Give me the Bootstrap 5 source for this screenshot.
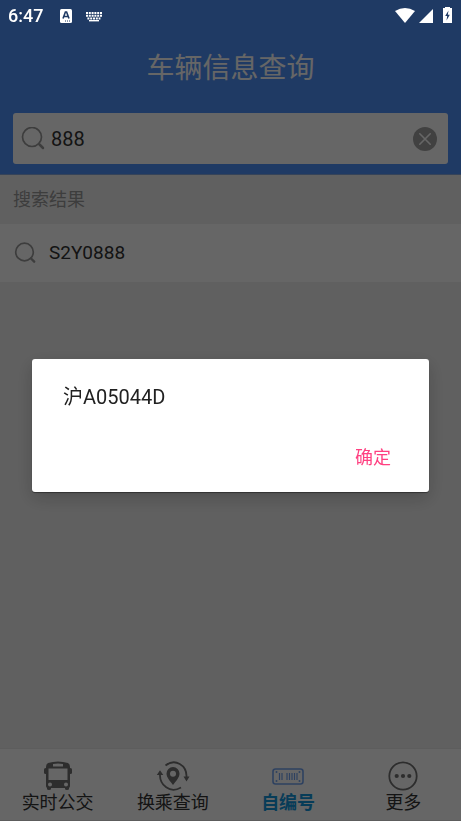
<!DOCTYPE html>
<html lang="zh-CN">
<head>
<meta charset="utf-8">
<meta name="viewport" content="width=device-width, initial-scale=1">
<title>车辆信息查询</title>
<link href="https://cdn.jsdelivr.net/npm/bootstrap@5.3.0/dist/css/bootstrap.min.css" rel="stylesheet">
<style>
  body { background: #f0f0f0; font-family: Roboto, "Noto Sans CJK SC", sans-serif; color: #333; }
  svg { display: block; flex: none; }
  .app-head { background: #4e91fa; padding-bottom: 10px; border-bottom: 1px solid #84a8de; }
  .status { z-index: 1060; height: 30px; padding: 1px 8px 0; color: #fff; font-size: 18px; font-weight: 500; }
  .app-title { font-size: 28px; font-weight: 400; line-height: 40px; padding: 19px 0 24px; }
  .search { margin: 0 13px; height: 51px; padding: 0 11px 0 8px; border-radius: 3px; }
  .search input { font-size: 20px; color: #333; padding: 0 6px; line-height: 30px; }
  .search input::-webkit-search-cancel-button { display: none; }
  .section-label { font-size: 18px; font-weight: 400; line-height: 24px; padding: 13px 13px 12px; color: #999; }
  .result { height: 58px; padding: 0 14px; gap: 12px; font-size: 19px; color: #333; border: 0; border-bottom: 1px solid #e0e0e0; border-radius: 0; }
  .tabs { border-top: 1px solid #e8e8e8; border-bottom: 1px solid #e6e6e6; padding: 12px 0 5px; }
  .tabs a { color: #333; font-size: 18px; line-height: 24px; }
  .tabs a.active { color: #1296db; font-weight: 700; }
  .scrim { background: #000; opacity: .6; z-index: 1040; }
  .dialog-area { padding-top: 30px; }
  .dialog-area .modal-dialog { margin: 0 32px; max-width: none; min-height: 100%; }
  .dialog-area .modal-content { border: 0; border-radius: 3px; padding: 22px 31px 15px; box-shadow: 0 6px 18px rgba(0,0,0,.2), 0 1px 1px rgba(0,0,0,.4); }
  .plate { font-size: 20px; line-height: 32px; color: #212121; }
  .confirm { color: #ff4081; font-size: 18px; line-height: 27px; padding: 6px 7px; margin-top: 25px; }
</style>
</head>
<body class="d-flex flex-column min-vh-100">
<header class="app-head">
  <div class="status position-relative d-flex align-items-center">
    <span>6:47</span>
    <svg class="ms-3" width="14" height="14" viewBox="0 0 14 14" aria-hidden="true"><rect x="1" width="12" height="14" rx="1.5" fill="#fff"/><path d="M4 9.5 6.4 3h1.2L10 9.5M5 7.5h4" fill="none" stroke="#1f3a64" stroke-width="1.6"/><path d="M6 12h1m1 0h1m1 0h1" stroke="#1f3a64"/></svg>
    <svg class="ms-2 me-auto" width="28" height="12" viewBox="0 0 28 12" aria-hidden="true"><g stroke="#fff" stroke-width="2" stroke-dasharray="2 .8"><path d="M5 3h16M5 5.7h16M6.4 8.4h13"/></g><path d="M8 10.7h10" stroke="#fff" stroke-width="1.4"/></svg>
    <svg width="20" height="18" viewBox="0 0 20 18" aria-hidden="true"><path d="M0 4Q10-2 20 4L10 16Z" fill="#fff"/></svg>
    <svg class="ms-1" width="14" height="18" viewBox="0 0 14 18" aria-hidden="true"><path d="M0 16 14 2v14Z" fill="#fff"/></svg>
    <svg class="ms-2" width="12" height="18" viewBox="0 0 12 18" aria-hidden="true"><path d="M4 0h5v1h2v15H2V1h2Z" fill="#fff"/><path d="M7.5 3.5 4.2 9h2L5.5 13.5 8.8 7.8h-2Z" fill="#1f3a64"/></svg>
  </div>
  <h1 class="app-title text-white text-center m-0">车辆信息查询</h1>
  <form class="search bg-white d-flex align-items-center" role="search">
    <svg width="24" height="24" viewBox="0 0 24 24" fill="none" stroke="#999" aria-hidden="true"><circle cx="11" cy="10" r="9.5" stroke-width="1.7"/><path d="m18.5 17.5 3.500 3.500" stroke-width="2.5" stroke-linecap="round"/></svg>
    <input class="form-control border-0 shadow-none bg-transparent flex-grow-1" type="search" value="888" aria-label="车辆信息查询">
    <button class="btn p-0 border-0" type="reset" aria-label="清除"><svg width="24" height="24" viewBox="0 0 24 24"><circle cx="12" cy="12" r="12" fill="#a3a3a3"/><path d="m6.8 6.8 10.4 10.4m0-10.4L6.8 17.2" stroke="#fff" stroke-width="1.6" stroke-linecap="round"/></svg></button>
  </form>
</header>
<main class="flex-grow-1">
  <h2 class="section-label m-0">搜索结果</h2>
  <div class="list-group list-group-flush">
    <button type="button" class="list-group-item list-group-item-action result bg-white d-flex align-items-center">
      <svg width="23" height="22" viewBox="0 0 23 22" fill="none" stroke="#999" aria-hidden="true"><circle cx="10.5" cy="10" r="8.8" stroke-width="1.7"/><path d="m17 16.5 3.2 3.2" stroke-width="2.4" stroke-linecap="round"/></svg>
      <span>S2Y0888</span>
    </button>
  </div>
</main>
<nav class="tabs bg-white row g-0 text-center">
  <a href="#bus" class="col text-decoration-none d-flex flex-column align-items-center">
    <svg width="30" height="30" viewBox="0 0 30 30" fill="#707070" aria-hidden="true"><path fill-rule="evenodd" d="M3 6Q3 3 5 2 15-1 25 2q2 1 2 4v19q0 1-1 2v1q0 1-2 1t-2-1v-1H8v1q0 1-2 1t-2-1v-1q-1-1-1-2ZM10 3v2.5h10V3Q15 2 10 3ZM5.5 7.5V19h19V7.5ZM7 21.5a2 2 0 1 0 0 4 2 2 0 0 0 0-4Zm16 0a2 2 0 1 0 0 4 2 2 0 0 0 0-4Z"/><rect x="1" y="7" width="3" height="6" rx="1.5"/><rect x="26" y="7" width="3" height="6" rx="1.5"/></svg>
    <span>实时公交</span>
  </a>
  <a href="#transfer" class="col text-decoration-none d-flex flex-column align-items-center">
    <svg width="34" height="30" viewBox="0 0 34 30" aria-hidden="true"><g fill="none" stroke="#707070" stroke-width="1.8"><path d="M9.5 4.5C19-3 31 4 30.5 16M4 13C3.5 24 14 33 25 26.5"/></g><path d="m27.5 15.5 3 5 3-5ZM.8 14 4 9.3 7.3 14Z" fill="#707070"/><path fill-rule="evenodd" d="M17 6A6.5 6.5 0 0 0 10.5 12.5c0 4 3.5 7.5 6.5 11.5 3-4 6.5-7.5 6.5-11.5A6.5 6.5 0 0 0 17 6Zm0 3.7a3 3 0 1 1 0 6 3 3 0 0 1 0-6Z" fill="#707070"/></svg>
    <span>换乘查询</span>
  </a>
  <a href="#number" class="col active text-decoration-none d-flex flex-column align-items-center" aria-current="page">
    <svg width="32" height="30" viewBox="0 0 32 30" aria-hidden="true"><rect x="1" y="8" width="30" height="15" rx="2.5" fill="none" stroke="#73a4f0" stroke-width="1.6"/><g fill="#73a4f0"><circle cx="4.5" cy="11" r="1"/><circle cx="27.5" cy="11" r="1"/><circle cx="4.5" cy="20" r="1"/><circle cx="27.5" cy="20" r="1"/></g><path d="M7.5 12v7M10 12v7M15 12v7M17.5 12v7M20 12v7M22.5 12v7M25 12v7" stroke="#73a4f0" stroke-width="1.2"/></svg>
    <span>自编号</span>
  </a>
  <a href="#more" class="col text-decoration-none d-flex flex-column align-items-center">
    <svg width="30" height="30" viewBox="0 0 30 30" aria-hidden="true"><circle cx="15" cy="15" r="13.7" fill="none" stroke="#707070" stroke-width="1.8"/><g fill="#707070"><circle cx="8.7" cy="15" r="2.1"/><circle cx="15" cy="15" r="2.1"/><circle cx="21.3" cy="15" r="2.1"/></g></svg>
    <span>更多</span>
  </a>
</nav>
<div class="scrim position-fixed top-0 start-0 w-100 h-100"></div>
<div class="modal d-block dialog-area" role="dialog" aria-modal="true" aria-labelledby="plate">
  <div class="modal-dialog modal-dialog-centered">
    <div class="modal-content">
      <p class="plate m-0" id="plate">沪A05044D</p>
      <div class="d-flex justify-content-end"><button type="button" class="btn border-0 confirm">确定</button></div>
    </div>
  </div>
</div>
<script src="https://cdn.jsdelivr.net/npm/bootstrap@5.3.0/dist/js/bootstrap.bundle.min.js"></script>
</body>
</html>
